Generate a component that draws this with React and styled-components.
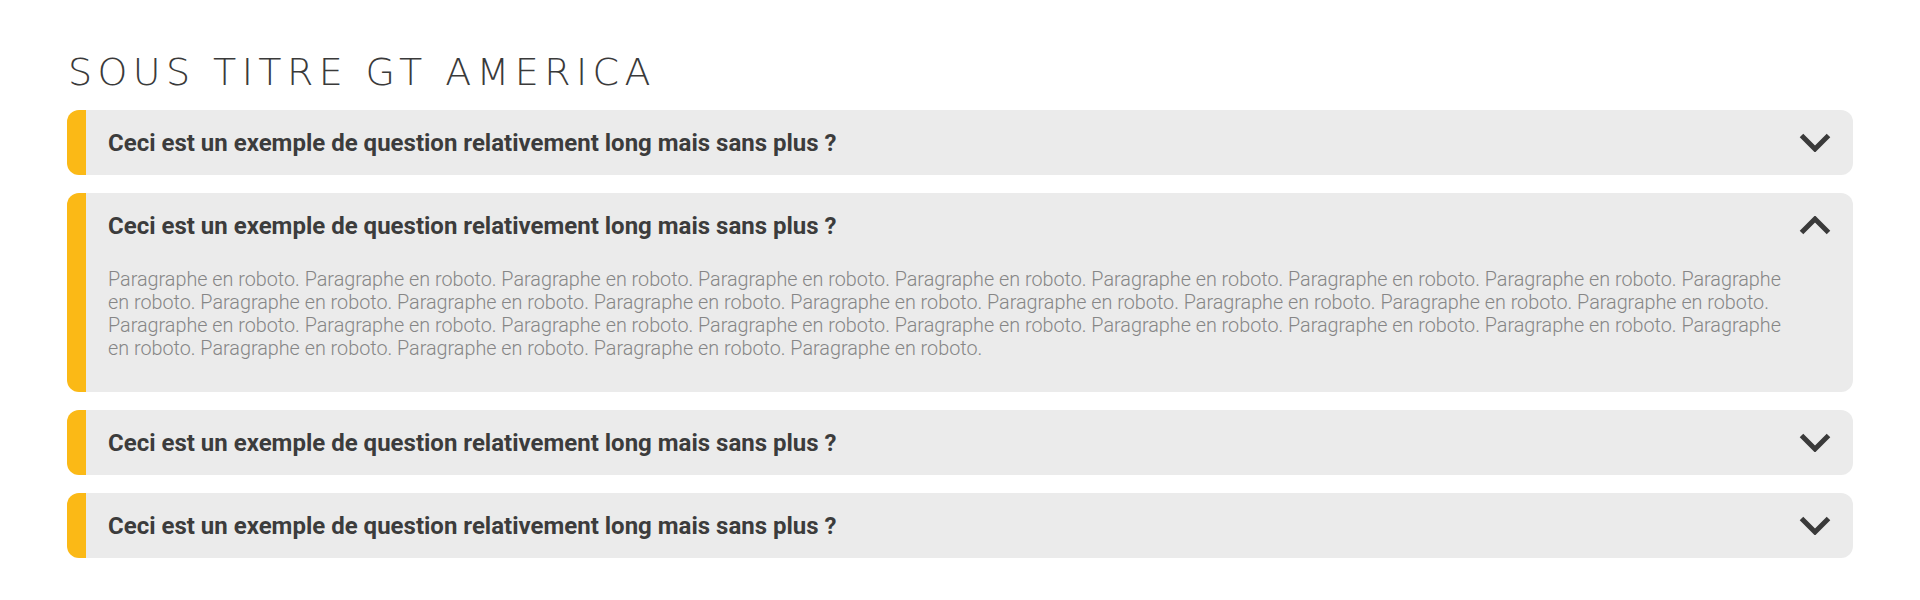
import React from 'react';
import styled, { createGlobalStyle } from 'styled-components';

const GlobalStyle = createGlobalStyle`
  html, body {
    margin: 0;
    padding: 0;
    background: #ffffff;
  }
`;

const Page = styled.div`
  padding: 53px 67px 0 67px;
`;

const Title = styled.h2`
  margin: 0 0 19px 1px;
  font-family: 'DejaVu Sans', sans-serif;
  font-weight: 200;
  font-size: 38px;
  line-height: 1;
  letter-spacing: 5.4px;
  color: #3a3a3a;
  text-transform: uppercase;
`;

const List = styled.div`
  display: flex;
  flex-direction: column;
  gap: 18px;
`;

const Item = styled.div`
  background: #ebebeb;
  border-left: 19px solid #fbb916;
  border-radius: 12px;
  padding-bottom: ${(props) => (props.open ? '32px' : '0')};
`;

const Header = styled.div`
  display: flex;
  align-items: center;
  justify-content: space-between;
  height: 65px;
  padding: 0 22px 0 22px;
`;

const Question = styled.h3`
  margin: 0;
  font-family: Roboto, 'Liberation Sans', sans-serif;
  font-weight: 700;
  font-size: 24px;
  color: #3c3c3c;
`;

const Answer = styled.p`
  margin: 10px 0 0 0;
  padding: 0 63px 0 22px;
  font-family: Roboto, 'Liberation Sans', sans-serif;
  font-weight: 300;
  font-size: 19.8px;
  line-height: 23px;
  color: #868686;
`;

const Chevron = ({ up }) => (
  <svg width="32" height="19" viewBox="0 0 32 19">
    <polyline
      points={up ? '2.5,16.5 16,3 29.5,16.5' : '2.5,2.5 16,16 29.5,2.5'}
      fill="none"
      stroke="#3a3a3a"
      strokeWidth="5"
      strokeLinejoin="miter"
    />
  </svg>
);

const question = 'Ceci est un exemple de question relativement long mais sans plus ?';
const answer = Array(30).fill('Paragraphe en roboto.').join(' ');

const items = [
  { open: false },
  { open: true },
  { open: false },
  { open: false },
];

const App = () => (
  <Page>
    <GlobalStyle />
    <Title>Sous titre GT America</Title>
    <List>
      {items.map((item, i) => (
        <Item key={i} open={item.open}>
          <Header>
            <Question>{question}</Question>
            <Chevron up={item.open} />
          </Header>
          {item.open && <Answer>{answer}</Answer>}
        </Item>
      ))}
    </List>
  </Page>
);

export default App;
